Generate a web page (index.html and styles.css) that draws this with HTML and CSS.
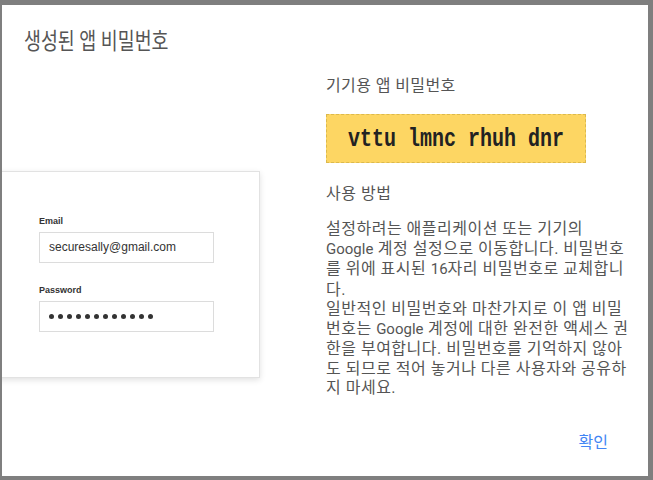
FILE: index.html
```html
<!DOCTYPE html>
<html lang="ko">
<head>
<meta charset="utf-8">
<title>생성된 앱 비밀번호</title>
<link rel="stylesheet" href="styles.css">
</head>
<body>
<div class="dialog">
  <h1 class="title"><span class="title-text">생성된 앱 비밀번호</span></h1>
  <div class="content">
    <div class="left">
      <div class="card">
        <div class="label">Email</div>
        <div class="input">securesally@gmail.com</div>
        <div class="label label-pw">Password</div>
        <div class="input dots">
          <span></span><span></span><span></span><span></span><span></span><span></span>
          <span></span><span></span><span></span><span></span><span></span><span></span>
        </div>
      </div>
    </div>
    <div class="right">
      <div class="heading">기기용 앱 비밀번호</div>
      <div class="code"><span class="code-text">vttu lmnc rhuh dnr</span></div>
      <div class="subhead">사용 방법</div>
      <p class="desc">설정하려는 애플리케이션 또는 기기의<br><span class="en">Google</span> 계정 설정으로 이동합니다. 비밀번호<br>를 위에 표시된 <span class="en">16</span>자리 비밀번호로 교체합니<br>다.<br>일반적인 비밀번호와 마찬가지로 이 앱 비밀<br>번호는 <span class="en">Google</span> 계정에 대한 완전한 액세스 권<br>한을 부여합니다. 비밀번호를 기억하지 않아<br>도 되므로 적어 놓거나 다른 사용자와 공유하<br>지 마세요.</p>
      <div class="actions"><button class="ok">확인</button></div>
    </div>
  </div>
</div>
</body>
</html>
```
FILE: styles.css
```css
html, body {
  margin: 0;
  padding: 0;
  background: #7f7f7f;
  height: 480px;
  overflow: hidden;
}
body {
  padding: 5px 5px 4px 2px;
  box-sizing: border-box;
  font-family: Roboto, "Noto Sans CJK KR", sans-serif;
}
.dialog {
  background: #fff;
  height: 471px;
  box-sizing: border-box;
  padding-top: 23px;
  overflow: hidden;
}
.title {
  margin: 0 0 0 22px;
  font-size: 23px;
  line-height: 28px;
  font-weight: 400;
  color: #555;
}
.title-text {
  display: inline-block;
  transform: scaleX(0.8);
  transform-origin: left center;
  white-space: nowrap;
}
.content {
  display: flex;
  margin-top: 20px;
}
.left {
  width: 324px;
  flex: none;
  padding-top: 95px;
}
.card {
  margin-left: -40px;
  width: 298px;
  height: 207px;
  box-sizing: border-box;
  border: 1px solid #e2e2e2;
  background: #fff;
  box-shadow: 0 2px 6px rgba(0,0,0,0.12);
  padding: 43px 0 0 76px;
  font-family: "Liberation Sans", Arial, sans-serif;
}
.label {
  font-size: 9px;
  font-weight: 700;
  color: #333;
  line-height: 12px;
  margin-bottom: 5px;
}
.label-pw {
  margin-top: 21px;
}
.input {
  width: 175px;
  height: 31px;
  box-sizing: border-box;
  border: 1px solid #dcdcdc;
  padding-left: 9px;
  font-size: 12px;
  line-height: 29px;
  color: #333;
}
.dots {
  display: flex;
  align-items: center;
  gap: 4px;
}
.dots span {
  width: 5px;
  height: 5px;
  border-radius: 50%;
  background: #333;
}
.right {
  width: 320px;
  flex: none;
}
.heading {
  font-size: 16px;
  letter-spacing: 0.4px;
  line-height: 20px;
  color: #555;
}
.code {
  margin-top: 18px;
  width: 260px;
  height: 49px;
  box-sizing: border-box;
  background: #fdd663;
  border: 1px dashed #dcb94c;
  display: flex;
  align-items: center;
  justify-content: center;
}
.code-text {
  display: inline-block;
  font-family: "Liberation Mono", monospace;
  font-weight: 700;
  font-size: 20px;
  line-height: 20px;
  color: #222;
  white-space: pre;
  transform: scaleY(1.3);
}
.subhead {
  margin-top: 21px;
  font-size: 16px;
  letter-spacing: 0.5px;
  line-height: 20px;
  color: #555;
}
.desc {
  margin: 15px 0 0;
  font-size: 16px;
  letter-spacing: 0.5px;
  line-height: 19.5px;
  color: #555;
  white-space: nowrap;
}
.en {
  font-size: 15px;
  letter-spacing: 0;
}
.actions {
  display: flex;
  justify-content: flex-end;
  width: 300px;
  margin-top: 35px;
  padding-right: 18px;
  box-sizing: border-box;
}
.ok {
  background: none;
  border: 0;
  padding: 0;
  font-family: Roboto, "Noto Sans CJK KR", sans-serif;
  font-size: 16px;
  line-height: 20px;
  color: #4285f4;
}
```
